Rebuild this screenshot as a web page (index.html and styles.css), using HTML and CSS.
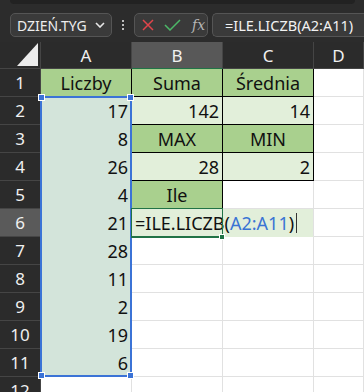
FILE: index.html
```html
<!DOCTYPE html>
<html lang="pl">
<head>
  <meta charset="UTF-8">
  <title>Arkusz - ILE.LICZB</title>
  <link rel="stylesheet" href="styles.css">
</head>
<body>
  <div class="toolbar">
    <div class="ribbon-edge"></div>
    <div class="bar-row">
      <div class="name-box">
        <span>DZIEŃ.TYG</span>
        <svg width="10" height="6" viewBox="0 0 10 6"><path d="M1 1 L5 5 L9 1" fill="none" stroke="#e6e6e6" stroke-width="1.6"/></svg>
      </div>
      <div class="dots"><i></i><i></i><i></i></div>
      <div class="fx-box">
        <svg width="12" height="12" viewBox="0 0 12 12"><path d="M1 1 L11 11 M11 1 L1 11" stroke="#e0454b" stroke-width="1.5"/></svg>
        <svg width="17" height="12" viewBox="0 0 17 12"><path d="M1 6 L6 11 L16 1" fill="none" stroke="#4cb868" stroke-width="1.5"/></svg>
        <span class="fx">fx</span>
      </div>
      <div class="formula-input">=ILE.LICZB(A2:A11)</div>
    </div>
  </div>

  <div class="sheet">
    <!-- header row -->
    <div class="hd corner"><span class="tri"></span></div>
    <div class="hd">A</div>
    <div class="hd sel-col">B</div>
    <div class="hd">C</div>
    <div class="hd">D</div>

    <div class="hd rn">1</div>
    <div class="cell green c edge-r">Liczby</div>
    <div class="cell green c box">Suma</div>
    <div class="cell green c box">Średnia</div>
    <div class="cell"></div>

    <div class="hd rn">2</div>
    <div class="cell picked r">17</div>
    <div class="cell pale r box">142</div>
    <div class="cell pale r box">14</div>
    <div class="cell"></div>

    <div class="hd rn">3</div>
    <div class="cell picked r">8</div>
    <div class="cell green c box">MAX</div>
    <div class="cell green c box">MIN</div>
    <div class="cell"></div>

    <div class="hd rn">4</div>
    <div class="cell picked r">26</div>
    <div class="cell pale r box">28</div>
    <div class="cell pale r box">2</div>
    <div class="cell"></div>

    <div class="hd rn">5</div>
    <div class="cell picked r">4</div>
    <div class="cell green c box">Ile</div>
    <div class="cell"></div>
    <div class="cell"></div>

    <div class="hd rn sel-row">6</div>
    <div class="cell picked r">21</div>
    <div class="cell pale editing">=ILE.LICZB(<span class="ref">A2:A11</span>)<span class="caret"></span></div>
    <div class="cell"></div>

    <div class="hd rn">7</div>
    <div class="cell picked r">28</div>
    <div class="cell"></div>
    <div class="cell"></div>
    <div class="cell"></div>

    <div class="hd rn">8</div>
    <div class="cell picked r">11</div>
    <div class="cell"></div>
    <div class="cell"></div>
    <div class="cell"></div>

    <div class="hd rn">9</div>
    <div class="cell picked r">2</div>
    <div class="cell"></div>
    <div class="cell"></div>
    <div class="cell"></div>

    <div class="hd rn">10</div>
    <div class="cell picked r">19</div>
    <div class="cell"></div>
    <div class="cell"></div>
    <div class="cell"></div>

    <div class="hd rn">11</div>
    <div class="cell picked r">6</div>
    <div class="cell"></div>
    <div class="cell"></div>
    <div class="cell"></div>

    <div class="hd rn">12</div>
    <div class="cell"></div>
    <div class="cell"></div>
    <div class="cell"></div>
    <div class="cell"></div>

    <!-- overlays: selected range A2:A11 and active cell B6 -->
    <div class="range">
      <span class="knob tl"></span>
      <span class="knob tr"></span>
      <span class="knob bl"></span>
      <span class="knob br"></span>
    </div>
    <div class="active"><span class="knob-g"></span></div>
  </div>
</body>
</html>
```

FILE: styles.css
```css
body {
  margin: 0;
  width: 364px;
  height: 392px;
  overflow: hidden;
  background: #ffffff;
  font-family: "Noto Sans", "Open Sans", sans-serif;
}

/* formula bar */
.toolbar {
  height: 42px;
  background: #2c2c2c;
  position: relative;
}
.ribbon-edge {
  height: 4px;
  margin: 0 9px 0 10px;
  background: #222222;
  border-radius: 0 0 5px 5px;
}
.bar-row {
  display: flex;
  align-items: center;
  padding: 9px 0 0 10px;
  height: 24px;
}
.name-box {
  width: 102px;
  height: 24px;
  box-sizing: border-box;
  display: flex;
  align-items: center;
  justify-content: space-between;
  padding: 0 6px 0 6px;
  background: #3a3a3a;
  border: 1px solid #555555;
  border-radius: 5px;
  color: #eeeeee;
  font-size: 14px;
}
.dots {
  width: 22px;
  display: flex;
  flex-direction: column;
  align-items: center;
  gap: 2px;
}
.dots i {
  width: 2px;
  height: 2px;
  background: #bdbdbd;
}
.fx-box {
  width: 74px;
  height: 24px;
  box-sizing: border-box;
  display: flex;
  align-items: center;
  gap: 10px;
  padding-left: 7px;
  background: #3a3a3a;
  border: 1px solid #555555;
  border-radius: 5px;
}
.fx {
  font-family: "DejaVu Serif", "Liberation Serif", serif;
  font-style: italic;
  color: #b5b5b5;
  font-size: 14px;
  margin-left: 1px;
}
.formula-input {
  margin-left: 4px;
  flex: 1;
  height: 24px;
  box-sizing: border-box;
  padding-left: 12px;
  line-height: 22px;
  background: #3a3a3a;
  border: 1px solid #555555;
  border-right: none;
  border-radius: 5px 0 0 5px;
  color: #f2f2f2;
  font-size: 14.5px;
  white-space: nowrap;
}

/* grid */
.sheet {
  position: relative;
  display: grid;
  grid-template-columns: 41px 91px 91px 91px 1fr;
  grid-template-rows: 27px repeat(12, 28px);
  font-size: 18px;
}
.hd {
  background: #2b2b2b;
  color: #f0f0f0;
  border-right: 1px solid #454545;
  border-bottom: 1px solid #454545;
  display: flex;
  align-items: center;
  justify-content: center;
  font-size: 17px;
}
.corner {
  position: relative;
}
.tri {
  position: absolute;
  right: 2px;
  bottom: 2px;
  width: 0;
  height: 0;
  border-left: 21px solid transparent;
  border-bottom: 23px solid #ececec;
}
.sel-col {
  background: #585858;
  border-bottom: 1px solid #217346;
}
.sel-row {
  background: #5a5a5a;
  border-right: 1px solid #2c8a55;
}
.cell {
  border-right: 1px solid #e1e1e1;
  border-bottom: 1px solid #e1e1e1;
  display: flex;
  align-items: center;
  color: #111111;
  white-space: nowrap;
}
.cell.c { justify-content: center; }
.cell.r { justify-content: flex-end; padding-right: 3px; }
.green {
  background: #a9d08e;
  border-color: #a9d08e;
}
.pale {
  background: #e2efda;
  border-color: #e2efda;
}
.picked {
  background: #d3e4da;
  border-color: #d3e4da;
}
.box {
  border-right-color: #000000;
  border-bottom-color: #000000;
}
.edge-r {
  border-right-color: #000000;
}
.editing {
  grid-column: span 2;
  padding-left: 3px;
  border-right-color: #e1e1e1;
}
.ref {
  color: #3a74d4;
}
.caret {
  display: inline-block;
  width: 1px;
  height: 20px;
  margin-left: 2px;
  background: #333333;
}

/* overlays */
.range {
  position: absolute;
  left: 40px;
  top: 54px;
  width: 92px;
  height: 281px;
  box-sizing: border-box;
  border: 2px solid #3b73d6;
}
.knob {
  position: absolute;
  width: 5px;
  height: 5px;
  background: #3b73d6;
  border: 1px solid #ffffff;
}
.knob.tl { left: -4px; top: -4px; }
.knob.tr { right: -4px; top: -4px; }
.knob.bl { left: -4px; bottom: -4px; }
.knob.br { right: -4px; bottom: -4px; }
.active {
  position: absolute;
  left: 131px;
  top: 166px;
  width: 92px;
  height: 30px;
  box-sizing: border-box;
  border: 1px solid #217346;
  border-bottom-width: 2px;
}
.knob-g {
  position: absolute;
  right: -3px;
  bottom: -4px;
  width: 4px;
  height: 4px;
  background: #217346;
  border: 1px solid #ffffff;
}
```
